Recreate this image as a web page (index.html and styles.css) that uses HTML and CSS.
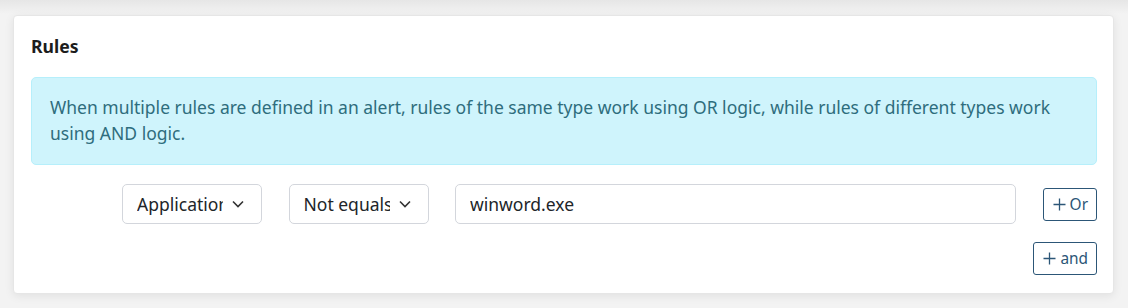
FILE: index.html
```html
<!DOCTYPE html>
<html lang="en">
<head>
    <meta charset="UTF-8">
    <title>Rules</title>
    <link rel="stylesheet" href="styles.css">
</head>
<body>
    <div class="card">
        <h2 class="card-title">Rules</h2>
        <div class="alert">
            When multiple rules are defined in an alert, rules of the same type work using OR logic, while rules of different types work using AND logic.
        </div>
        <div class="rule-row">
            <div class="select">
                <span class="select-text">Application</span>
                <svg class="chevron" width="12" height="8" viewBox="0 0 12 8"><path d="M1 1.5l5 5 5-5" fill="none" stroke="#333" stroke-width="1.6"/></svg>
            </div>
            <div class="select">
                <span class="select-text">Not equals</span>
                <svg class="chevron" width="12" height="8" viewBox="0 0 12 8"><path d="M1 1.5l5 5 5-5" fill="none" stroke="#333" stroke-width="1.6"/></svg>
            </div>
            <input class="value-input" type="text" value="winword.exe">
            <button class="btn-outline">
                <svg class="plus" width="13" height="13" viewBox="0 0 13 13"><path d="M6.5 0.5v12M0.5 6.5h12" stroke="#2c5677" stroke-width="1.3"/></svg>
                Or
            </button>
        </div>
        <div class="and-row">
            <button class="btn-outline">
                <svg class="plus" width="13" height="13" viewBox="0 0 13 13"><path d="M6.5 0.5v12M0.5 6.5h12" stroke="#2c5677" stroke-width="1.3"/></svg>
                and
            </button>
        </div>
    </div>
</body>
</html>
```

FILE: styles.css
```css
body {
    margin: 0;
    background: linear-gradient(#e6e6e6, #f3f3f3 14px);
    font-family: 'Noto Sans', sans-serif;
    color: #212529;
    height: 308px;
    overflow: hidden;
}
.card {
    margin: 15px 14px 0 13px;
    background-color: #fff;
    border: 1px solid #e6e6e6;
    border-radius: 4px;
    box-shadow: 0 2px 10px rgba(0, 0, 0, 0.08);
    padding: 18px 16px 18px 17px;
    display: flex;
    flex-direction: column;
}
.card-title {
    margin: 0 0 19px;
    font-size: 17.6px;
    font-weight: 700;
    line-height: 24px;
    color: #1c1c1c;
}
.alert {
    background-color: #cff4fc;
    border: 1px solid #b6effb;
    border-radius: 5px;
    color: #2e6d7d;
    font-size: 17.5px;
    line-height: 26px;
    padding: 16px 18px 18px 18px;
}
.rule-row {
    display: flex;
    align-items: center;
    gap: 26.5px;
    margin-top: 19px;
    padding-left: 91px;
}
.select {
    width: 140px;
    height: 40px;
    box-sizing: border-box;
    border: 1px solid #d3d6dc;
    border-radius: 5px;
    display: flex;
    align-items: center;
    padding: 0 17px 0 14px;
    font-size: 17.5px;
    flex-shrink: 0;
}
.select-text {
    flex: 1;
    overflow: hidden;
    white-space: nowrap;
    margin-right: 9px;
}
.chevron {
    flex-shrink: 0;
}
.value-input {
    flex: 1;
    height: 40px;
    box-sizing: border-box;
    border: 1px solid #d3d6dc;
    border-radius: 5px;
    padding: 0 14px;
    font-family: 'Noto Sans', sans-serif;
    font-size: 17.5px;
    color: #212529;
    outline: none;
}
.btn-outline {
    height: 33px;
    box-sizing: border-box;
    background: #fff;
    border: 1px solid #2c5677;
    border-radius: 3px;
    color: #2c5677;
    font-family: 'Noto Sans', sans-serif;
    font-size: 15.4px;
    padding: 0 8px 0 9px;
    display: flex;
    align-items: center;
    gap: 4px;
    flex-shrink: 0;
}
.and-row {
    display: flex;
    justify-content: flex-end;
    margin-top: 18px;
}
```
